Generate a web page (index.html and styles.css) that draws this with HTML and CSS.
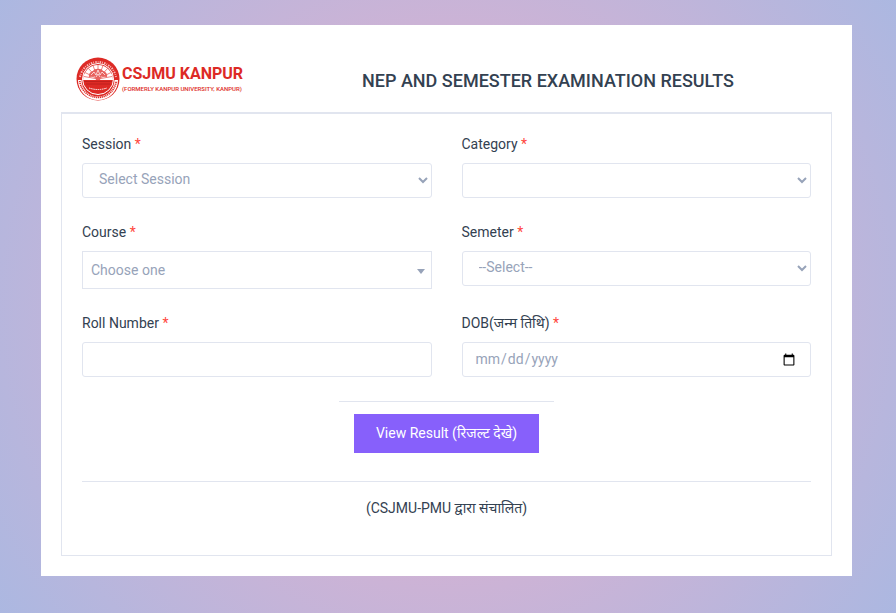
FILE: index.html
```html
<!DOCTYPE html>
<html lang="en-US">
<head>
<meta charset="utf-8">
<meta name="viewport" content="width=device-width, initial-scale=1">
<title>CSJMU Results</title>
<link rel="stylesheet" href="styles.css">
</head>
<body>
<main class="card">
  <header class="header">
    <div class="brand">
      <svg class="seal" viewBox="0 0 44 44" aria-hidden="true">
        <circle cx="22" cy="22" r="21.5" fill="#dd2a25"/>
        <path d="M2 23A20 20 0 0 0 42 23L38.500 23A16.500 16.500 0 0 1 5.500 23Z" fill="#fff"/>
        <path d="M3.800 24A18.300 18.300 0 0 0 40.200 24" fill="none" stroke="#dd2a25" stroke-width="1.800" stroke-dasharray="1.200 .7"/>
        <path d="M4 20A18.300 18.300 0 0 1 40 20" fill="none" stroke="#f7b9b6" stroke-width="2" stroke-dasharray="1.500 1 .8 1.200"/>
        <circle cx="22" cy="22" r="15.500" fill="#dd2a25" stroke="#fff" stroke-width="1"/>
        <path d="M7 23A15 15 0 0 1 37 23Z" fill="#fff"/>
        <g stroke="#e8625e" stroke-width=".8">
          <path d="M22 22V8M22 22L17 8.500M22 22L27 8.500M22 22L12.500 11.500M22 22L31.500 11.500M22 22L9 15.500M22 22L35 15.500M22 22L8 19.500M22 22L36 19.500"/>
        </g>
        <path d="M13 20C12 16 16 14 17 14C18 11 26 11 27 14C28 14 32 16 31 20L25 19.500L24 23H20L19 19.500Z" fill="#e8625e"/>
        <path d="M15 18L18 15L20 18L22 13L24 18L26 15L29 18M20 20L22 17L24 20" fill="none" stroke="#fff" stroke-width=".7"/>
        <path d="M8 24.500H36M10 27H34" stroke="#b91f1c" stroke-width=".8"/>
        <path d="M13 31Q22 34 31 31" fill="none" stroke="#fff" stroke-width="1" stroke-dasharray="1.500 .7"/>
      </svg>
      <div class="brand-text">
        <span class="brand-name">CSJMU KANPUR</span>
        <span class="brand-sub">(FORMERLY KANPUR UNIVERSITY, KANPUR)</span>
      </div>
    </div>
    <h1 class="title">NEP AND SEMESTER EXAMINATION RESULTS</h1>
  </header>
  <form class="panel">
    <div class="fields">
      <div class="field">
        <label for="session">Session <span class="required">*</span></label>
        <select class="control" id="session"><option>Select Session</option></select>
      </div>
      <div class="field">
        <label for="category">Category <span class="required">*</span></label>
        <select class="control" id="category"><option></option></select>
      </div>
      <div class="field">
        <label for="course">Course <span class="required">*</span></label>
        <div class="combo">
          <select class="control combo-select" id="course"><option>Choose one</option></select>
        </div>
      </div>
      <div class="field">
        <label for="semester">Semeter <span class="required">*</span></label>
        <select class="control" id="semester"><option>--Select--</option></select>
      </div>
      <div class="field">
        <label for="roll">Roll Number <span class="required">*</span></label>
        <input class="control" id="roll" type="text">
      </div>
      <div class="field">
        <label for="dob">DOB(जन्म तिथि) <span class="required">*</span></label>
        <input class="control" id="dob" type="date">
      </div>
    </div>
    <div class="actions">
      <button class="submit" type="button">View Result (रिजल्ट देखे)</button>
    </div>
    <p class="credit">(CSJMU-PMU द्वारा संचालित)</p>
  </form>
</main>
</body>
</html>
```
FILE: styles.css
```css
* {
  box-sizing: border-box;
}

body {
  margin: 0;
  min-height: 100vh;
  padding: 25px 44px 37px 41px;
  background: radial-gradient(circle 735px at center, #eeaeca 0%, #94bbe9 100%);
  color: #334151;
  font-family: Roboto, "Noto Sans", sans-serif;
  font-size: 14px;
  line-height: 21px;
}

.card {
  background: #fff;
  padding: 20px;
}

.header {
  display: flex;
  align-items: center;
  height: 67px;
  padding: 0 15px;
}

.brand {
  display: flex;
  align-items: center;
  gap: 2px;
  flex: 0 0 286px;
  color: #dd2a25;
  font-weight: bold;
  white-space: nowrap;
}

.seal {
  width: 44px;
  height: 44px;
  flex: none;
}

.brand-text {
  display: flex;
  flex-direction: column;
}

.brand-name {
  font-size: 16px;
  line-height: 20px;
}

.brand-sub {
  font-size: 6px;
  font-weight: 500;
  line-height: 9px;
}

.title {
  margin: 4px 0 0;
  font-size: 18px;
  font-weight: 500;
  line-height: 22px;
}

.panel {
  border: 1px solid #e1e5ef;
  border-top-width: 2px;
  padding: 20px 20px 36px;
}

.fields {
  display: grid;
  grid-template-columns: 1fr 1fr;
  gap: 24px 30px;
}

.field {
  display: flex;
  flex-direction: column;
  gap: 8px;
}

.required {
  color: #ff473d;
}

.control {
  width: 100%;
  height: 35px;
  border: 1px solid #e1e5ef;
  border-radius: 3px;
  padding: 0 12px;
  background: #fff;
  color: #97a3b9;
  font: inherit;
}

select.control {
  padding: 0 0 3px 12px;
}

.combo {
  display: grid;
  align-items: center;
}

.combo-select,
.combo::after {
  grid-area: 1 / 1;
}

.combo .combo-select {
  height: 38px;
  border-radius: 0;
  padding: 0 8px;
  appearance: none;
}

.combo::after {
  content: "";
  justify-self: end;
  margin: 3px 7px 0 0;
  border: 4px solid transparent;
  border-top: 5px solid #97a3b9;
  border-bottom: 0;
  pointer-events: none;
}

.actions {
  width: fit-content;
  margin: 24px auto 28px;
  border-top: 1px solid #e1e5ef;
  padding: 12px 15px 0;
}

.submit {
  display: block;
  height: 39px;
  border: 0;
  padding: 0 22px;
  background: #8760fb;
  color: #fff;
  font: inherit;
}

.credit {
  margin: 0;
  border-top: 1px solid #e1e5ef;
  padding-top: 16px;
  text-align: center;
}
```
